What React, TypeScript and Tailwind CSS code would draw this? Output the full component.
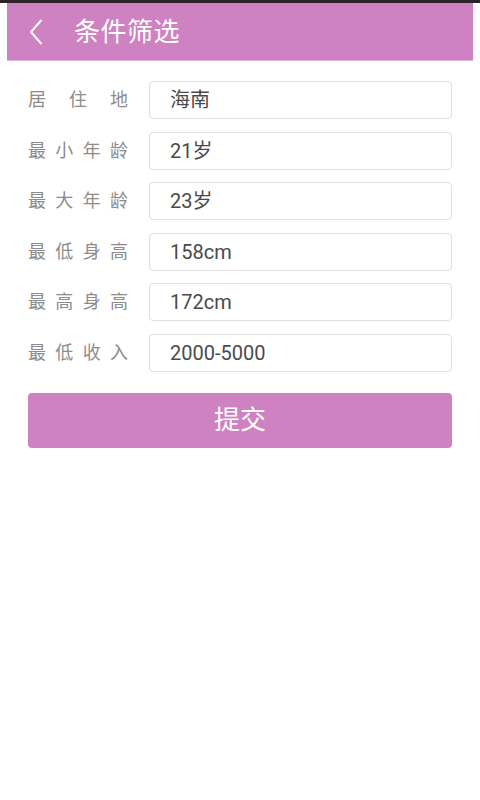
import React from "react";

const rows: { label: string[]; value: string }[] = [
  { label: ["居", "住", "地"], value: "海南" },
  { label: ["最", "小", "年", "龄"], value: "21岁" },
  { label: ["最", "大", "年", "龄"], value: "23岁" },
  { label: ["最", "低", "身", "高"], value: "158cm" },
  { label: ["最", "高", "身", "高"], value: "172cm" },
  { label: ["最", "低", "收", "入"], value: "2000-5000" },
];

export default function App() {
  return (
    <div
      className="w-[480px] h-[800px] bg-white flex flex-col"
      style={{ fontFamily: "Roboto, 'Noto Sans CJK SC', sans-serif" }}
    >
      <div className="h-[3px] bg-[#2b2327]" />
      <div className="mx-[7px] h-[58px] bg-[#cf82c1] flex items-center border-b-[1.5px] border-[#e3b6dc]">
        <svg width="14" height="26" viewBox="0 0 14 26" className="ml-[22px] mt-[1px]">
          <path d="M12 1.5 L2 13 L12 24.5" fill="none" stroke="#fff" strokeWidth="2" strokeLinecap="round" strokeLinejoin="round" />
        </svg>
        <span className="ml-[31px] mt-[1px] text-white text-[26px] leading-none tracking-[0.5px]">条件筛选</span>
      </div>
      <div className="px-[28px] pt-[20px] flex flex-col gap-[12.6px]">
        {rows.map((r) => (
          <div key={r.value} className="flex items-center h-[38px]">
            <div className="w-[100px] flex justify-between text-[18px] text-[#8c8c8c] leading-none">
              {r.label.map((c, i) => (
                <span key={i}>{c}</span>
              ))}
            </div>
            <div className="ml-[21px] flex-1 h-[38px] border border-[#dedede] rounded-[4px] flex items-center pl-[20px] text-[20px] text-[#4a4a4a]">
              {r.value}
            </div>
          </div>
        ))}
      </div>
      <div className="mx-[28px] mt-[21px] h-[55px] rounded-[4px] bg-[#cf82c1] flex items-center justify-center text-white text-[26px]">
        提交
      </div>
    </div>
  );
}
